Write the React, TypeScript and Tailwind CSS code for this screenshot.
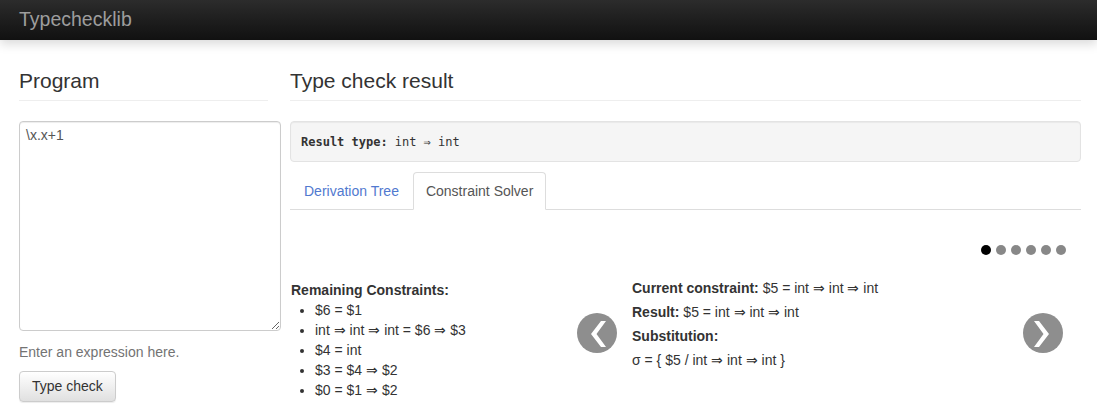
import React from 'react';

const constraints = ['$6 = $1', 'int ⇒ int ⇒ int = $6 ⇒ $3', '$4 = int', '$3 = $4 ⇒ $2', '$0 = $1 ⇒ $2'];

const Arrow = ({ dir }: { dir: 'left' | 'right' }) => (
  <div className="w-[40px] h-[40px] rounded-full bg-[#8e8e8e] mt-[33px] shrink-0">
    <svg width="40" height="40" viewBox="0 0 40 40">
      {dir === 'left' ? (
        <polygon points="24,8 29,8 19.5,21 29,34 24,34 14,21" fill="#fff" />
      ) : (
        <polygon points="16,8 11,8 20.5,21 11,34 16,34 26,21" fill="#fff" />
      )}
    </svg>
  </div>
);

const App = () => {
  return (
    <div className="min-h-screen bg-white text-[#333] text-[14px] font-['Liberation_Sans',Arial,sans-serif]">
      <nav className="h-[40px] bg-gradient-to-b from-[#2c2c2c] to-[#111] shadow-[0_4px_10px_rgba(0,0,0,0.15)] flex items-center pl-[19px]">
        <span className="text-[19.5px] text-[#9d9d9d]">Typechecklib</span>
      </nav>

      <div className="flex pl-[19px]">
        {/* Program column */}
        <div className="w-[249px] shrink-0">
          <h3 className="mt-[29px] text-[21px] leading-[23px] pb-[8px] border-b border-[#eee]">Program</h3>
          <textarea
            className="mt-[20px] w-[262px] h-[210px] border border-[#ccc] rounded-[4px] px-[6px] py-[3px] leading-[20px] text-[#555] shadow-[inset_0_1px_1px_rgba(0,0,0,0.075)] outline-none block"
            defaultValue={'\\x.x+1'}
          />
          <p className="mt-[11px] leading-[20px] text-[#737373]">Enter an expression here.</p>
          <button className="mt-[9px] h-[31px] px-[12px] border border-[#ccc] rounded-[4px] bg-gradient-to-b from-white to-[#e0e0e0] shadow-[0_1px_1px_rgba(0,0,0,0.075)] text-[#333]">
            Type check
          </button>
        </div>

        {/* Result column */}
        <div className="ml-[22px] w-[791px] shrink-0">
          <h3 className="mt-[29px] text-[21px] leading-[23px] pb-[8px] border-b border-[#eee]">Type check result</h3>
          <div className="mt-[20px] h-[41px] flex items-center px-[10px] bg-[#f5f5f5] border border-[#e3e3e3] rounded-[4px] shadow-[inset_0_1px_1px_rgba(0,0,0,0.05)] font-['DejaVu_Sans_Mono',monospace] text-[12px]">
            <b>Result type:</b>
            <span className="ml-[7px]">int ⇒ int</span>
          </div>

          <div className="mt-[10px] flex border-b border-[#ddd] h-[38px]">
            <div className="h-[38px] px-[14px] flex items-center text-[#5179cf]">Derivation Tree</div>
            <div className="h-[38px] px-[12px] flex items-center text-[#555] bg-white border border-[#ddd] border-b-white rounded-t-[4px]">
              Constraint Solver
            </div>
          </div>

          <div className="flex justify-end gap-[5px] mt-[35px] pr-[15px]">
            <span className="w-[10px] h-[10px] rounded-full bg-black" />
            {[0, 1, 2, 3, 4].map((i) => (
              <span key={i} className="w-[10px] h-[10px] rounded-full bg-[#888]" />
            ))}
          </div>

          <div className="flex items-start mt-[25px]">
            <div className="w-[287px] shrink-0 pl-[1px] leading-[20px]">
              <b>Remaining Constraints:</b>
              <ul className="list-disc pl-[24px]">
                {constraints.map((c) => (
                  <li key={c}>{c}</li>
                ))}
              </ul>
            </div>
            <Arrow dir="left" />
            <div className="w-[406px] shrink-0 pl-[15px] -mt-[2px] leading-[20px] flex flex-col gap-[4px]">
              <p><b>Current constraint:</b> $5 = int ⇒ int ⇒ int</p>
              <p><b>Result:</b> $5 = int ⇒ int ⇒ int</p>
              <p><b>Substitution:</b></p>
              <p>σ = {'{'} $5 / int ⇒ int ⇒ int {'}'}</p>
            </div>
            <Arrow dir="right" />
          </div>
        </div>
      </div>
    </div>
  );
};

export default App;
